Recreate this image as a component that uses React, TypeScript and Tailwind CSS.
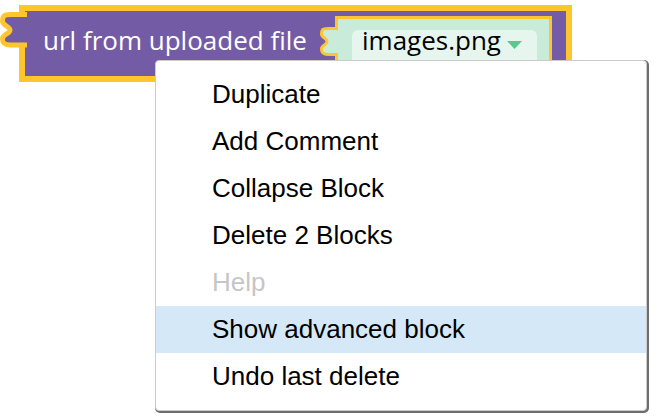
import React from 'react'

const items = [
  { label: 'Duplicate' },
  { label: 'Add Comment' },
  { label: 'Collapse Block' },
  { label: 'Delete 2 Blocks' },
  { label: 'Help', disabled: true },
  { label: 'Show advanced block', active: true },
  { label: 'Undo last delete' },
]

export default function App() {
  return (
    <div className="relative h-[418px] w-[660px] overflow-hidden bg-white">
      {/* block on the workspace */}
      <div className="absolute left-[19px] top-[5px]">
        <div className="flex h-[77px] w-[553px] items-start border-[6px] border-[#fec52e] bg-[#745ba6] pl-[18px] pr-[14px] font-['Open_Sans',sans-serif]">
          <span className="mt-[10px] text-[26px] text-white">url from uploaded file</span>
          <div className="relative ml-auto mt-[5px] h-[60px] w-[217px] border-[3px] border-[#fec52e] bg-[#c8ecd9] pl-[14px] pt-[11px]">
            <svg className="absolute left-[-20px] top-0" width="26" height="44" viewBox="0 0 26 44">
              <path
                d="M18 9.5 L10 9.5 C4 9.5 3.5 11 3.5 15 C3.5 19 9 19 9 22.5 C9 26 3.5 26 3.5 30 C3.5 34 5 35.5 10 35.5 L18 35.5 L26 35.5 L26 9.5 Z"
                fill="#c8ecd9"
              />
              <path
                d="M20 9.5 L10 9.5 C4 9.5 3.5 11 3.5 15 C3.5 19 9 19 9 22.5 C9 26 3.5 26 3.5 30 C3.5 34 5 35.5 10 35.5 L20 35.5"
                fill="none"
                stroke="#fec52e"
                strokeWidth="3"
              />
            </svg>
            <div className="flex h-[40px] w-[185px] items-start rounded-[6px] bg-[#e6f6ee] pl-[10px]">
              <span className="text-[26px] leading-[20px] text-black">images.png</span>
              <svg className="ml-[6px] mt-[11px]" width="15" height="8" viewBox="0 0 15 8">
                <path d="M0 0 L15 0 L7.5 8 Z" fill="#5cc68e" />
              </svg>
            </div>
          </div>
        </div>
        <svg className="absolute left-[-19px] top-[-5px]" width="34" height="56" viewBox="0 0 34 56">
          <path
            d="M27 14.5 L11 14.5 C3 14.5 2.5 17 2.5 21 C2.5 26 10 26 10 30 C10 34 2.5 34 2.5 39 C2.5 43 4 45 11 45 L27 45 L32 45 L32 14.5 Z"
            fill="#745ba6"
          />
          <path
            d="M27 14.5 L11 14.5 C3 14.5 2.5 17 2.5 21 C2.5 26 10 26 10 30 C10 34 2.5 34 2.5 39 C2.5 43 4 45 11 45 L27 45"
            fill="none"
            stroke="#fec52e"
            strokeWidth="5"
          />
        </svg>
      </div>

      {/* context menu */}
      <div className="absolute left-[155px] top-[60px] w-[492px] rounded-[4px] border border-[#cccccc] bg-white py-[10px] shadow-[1px_1px_0_1px_#6e6e6e] font-['Liberation_Sans',Arial,sans-serif]">
        {items.map((it) => (
          <div
            key={it.label}
            className={`flex h-[47px] items-center pl-[56px] text-[26px] ${it.active ? 'bg-[#d5e8f7]' : ''} ${it.disabled ? 'text-[#c6c6c6]' : 'text-black'}`}
          >
            {it.label}
          </div>
        ))}
      </div>
    </div>
  )
}
